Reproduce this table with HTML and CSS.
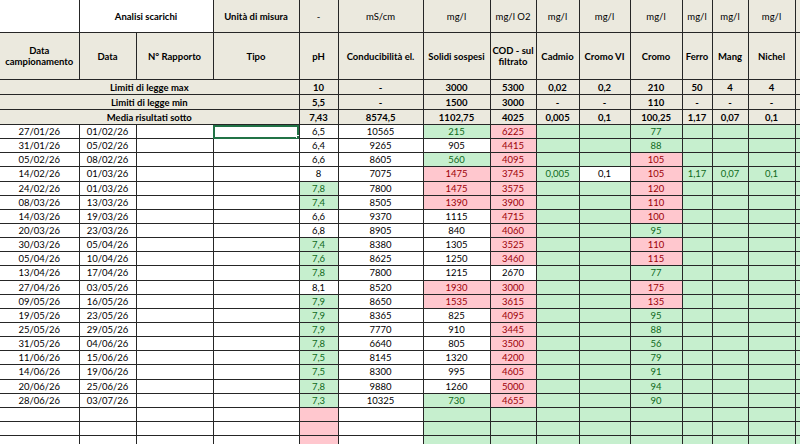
FILE: index.html
```html
<!DOCTYPE html>
<html lang="it">
<head>
<meta charset="utf-8">
<title>Analisi scarichi</title>
<link rel="stylesheet" href="styles.css">
</head>
<body>
<table class="sheet">
  <colgroup>
    <col class="c-a"><col class="c-b"><col class="c-c"><col class="c-d"><col class="c-e">
    <col class="c-f"><col class="c-g"><col class="c-h"><col class="c-i"><col class="c-j">
    <col class="c-k"><col class="c-l"><col class="c-m"><col class="c-n"><col class="c-o">
  </colgroup>
  <thead>
    <tr class="row-units">
      <td class="blank"></td>
      <td class="blank bold" colspan="2">Analisi scarichi</td>
      <td class="bold">Unità di misura</td>
      <td>-</td><td>mS/cm</td><td>mg/l</td><td>mg/l O2</td>
      <td>mg/l</td><td>mg/l</td><td>mg/l</td><td>mg/l</td><td>mg/l</td><td>mg/l</td><td></td>
    </tr>
    <tr class="row-names bold">
      <td>Data<br>campionamento</td><td>Data</td><td>N° Rapporto</td><td>Tipo</td>
      <td>pH</td><td>Conducibilità el.</td><td>Solidi sospesi</td><td>COD - sul<br>filtrato</td>
      <td>Cadmio</td><td>Cromo VI</td><td>Cromo</td><td>Ferro</td><td>Mang</td><td>Nichel</td><td></td>
    </tr>
    <tr class="row-lim bold">
      <td colspan="4">Limiti di legge max</td>
      <td>10</td><td>-</td><td>3000</td><td>5300</td><td>0,02</td><td>0,2</td><td>210</td><td>50</td><td>4</td><td>4</td><td></td>
    </tr>
    <tr class="row-lim bold">
      <td colspan="4">Limiti di legge min</td>
      <td>5,5</td><td>-</td><td>1500</td><td>3000</td><td>-</td><td>-</td><td>110</td><td>-</td><td>-</td><td>-</td><td></td>
    </tr>
    <tr class="row-lim bold">
      <td colspan="4">Media risultati sotto</td>
      <td>7,43</td><td>8574,5</td><td>1102,75</td><td>4025</td><td>0,005</td><td>0,1</td><td>100,25</td><td>1,17</td><td>0,07</td><td>0,1</td><td></td>
    </tr>
  </thead>
  <tbody>
    <tr><td>27/01/26</td><td>01/02/26</td><td></td><td class="sel"></td><td>6,5</td><td>10565</td><td class="g">215</td><td class="r">6225</td><td></td><td></td><td>77</td><td></td><td></td><td></td><td></td></tr>
    <tr><td>31/01/26</td><td>05/02/26</td><td></td><td></td><td>6,4</td><td>9265</td><td>905</td><td class="r">4415</td><td></td><td></td><td>88</td><td></td><td></td><td></td><td></td></tr>
    <tr><td>05/02/26</td><td>08/02/26</td><td></td><td></td><td>6,6</td><td>8605</td><td class="g">560</td><td class="r">4095</td><td></td><td></td><td class="r">105</td><td></td><td></td><td></td><td></td></tr>
    <tr><td>14/02/26</td><td>01/03/26</td><td></td><td></td><td>8</td><td>7075</td><td class="r">1475</td><td class="r">3745</td><td>0,005</td><td class="w">0,1</td><td class="r">105</td><td>1,17</td><td>0,07</td><td>0,1</td><td></td></tr>
    <tr><td>24/02/26</td><td>01/03/26</td><td></td><td></td><td class="g">7,8</td><td>7800</td><td class="r">1475</td><td class="r">3575</td><td></td><td></td><td class="r">120</td><td></td><td></td><td></td><td></td></tr>
    <tr><td>08/03/26</td><td>13/03/26</td><td></td><td></td><td class="g">7,4</td><td>8505</td><td class="r">1390</td><td class="r">3900</td><td></td><td></td><td class="r">110</td><td></td><td></td><td></td><td></td></tr>
    <tr><td>14/03/26</td><td>19/03/26</td><td></td><td></td><td>6,6</td><td>9370</td><td>1115</td><td class="r">4715</td><td></td><td></td><td class="r">100</td><td></td><td></td><td></td><td></td></tr>
    <tr><td>20/03/26</td><td>23/03/26</td><td></td><td></td><td>6,8</td><td>8905</td><td>840</td><td class="r">4060</td><td></td><td></td><td>95</td><td></td><td></td><td></td><td></td></tr>
    <tr><td>30/03/26</td><td>05/04/26</td><td></td><td></td><td class="g">7,4</td><td>8380</td><td>1305</td><td class="r">3525</td><td></td><td></td><td class="r">110</td><td></td><td></td><td></td><td></td></tr>
    <tr><td>05/04/26</td><td>10/04/26</td><td></td><td></td><td class="g">7,6</td><td>8625</td><td>1250</td><td class="r">3460</td><td></td><td></td><td class="r">115</td><td></td><td></td><td></td><td></td></tr>
    <tr><td>13/04/26</td><td>17/04/26</td><td></td><td></td><td class="g">7,8</td><td>7800</td><td>1215</td><td>2670</td><td></td><td></td><td>77</td><td></td><td></td><td></td><td></td></tr>
    <tr><td>27/04/26</td><td>03/05/26</td><td></td><td></td><td>8,1</td><td>8520</td><td class="r">1930</td><td class="r">3000</td><td></td><td></td><td class="r">175</td><td></td><td></td><td></td><td></td></tr>
    <tr><td>09/05/26</td><td>16/05/26</td><td></td><td></td><td class="g">7,9</td><td>8650</td><td class="r">1535</td><td class="r">3615</td><td></td><td></td><td class="r">135</td><td></td><td></td><td></td><td></td></tr>
    <tr><td>19/05/26</td><td>23/05/26</td><td></td><td></td><td class="g">7,9</td><td>8365</td><td>825</td><td class="r">4095</td><td></td><td></td><td>95</td><td></td><td></td><td></td><td></td></tr>
    <tr><td>25/05/26</td><td>29/05/26</td><td></td><td></td><td class="g">7,9</td><td>7770</td><td>910</td><td class="r">3445</td><td></td><td></td><td>88</td><td></td><td></td><td></td><td></td></tr>
    <tr><td>31/05/26</td><td>04/06/26</td><td></td><td></td><td class="g">7,8</td><td>6640</td><td>805</td><td class="r">3500</td><td></td><td></td><td>56</td><td></td><td></td><td></td><td></td></tr>
    <tr><td>11/06/26</td><td>15/06/26</td><td></td><td></td><td class="g">7,5</td><td>8145</td><td>1320</td><td class="r">4200</td><td></td><td></td><td>79</td><td></td><td></td><td></td><td></td></tr>
    <tr><td>14/06/26</td><td>19/06/26</td><td></td><td></td><td class="g">7,5</td><td>8300</td><td>995</td><td class="r">4605</td><td></td><td></td><td>91</td><td></td><td></td><td></td><td></td></tr>
    <tr><td>20/06/26</td><td>25/06/26</td><td></td><td></td><td class="g">7,8</td><td>9880</td><td>1260</td><td class="r">5000</td><td></td><td></td><td>94</td><td></td><td></td><td></td><td></td></tr>
    <tr><td>28/06/26</td><td>03/07/26</td><td></td><td></td><td class="g">7,3</td><td>10325</td><td class="g">730</td><td class="r">4655</td><td></td><td></td><td>90</td><td></td><td></td><td></td><td></td></tr>
    <tr><td></td><td></td><td></td><td></td><td class="r"></td><td></td><td class="g"></td><td class="g"></td><td></td><td></td><td></td><td></td><td></td><td></td><td></td></tr>
    <tr><td></td><td></td><td></td><td></td><td class="r"></td><td></td><td class="g"></td><td class="g"></td><td></td><td></td><td></td><td></td><td></td><td></td><td></td></tr>
    <tr><td></td><td></td><td></td><td></td><td class="r"></td><td></td><td class="g"></td><td class="g"></td><td></td><td></td><td></td><td></td><td></td><td></td><td></td></tr>
  </tbody>
</table>
</body>
</html>
```
FILE: styles.css
```css
:root {
  --beige: #ebe9de;
  --line: #262626;
  --green-bg: #c6efce;
  --green-fg: #0e6a1a;
  --red-bg: #ffc7ce;
  --red-fg: #9c0006;
}

html, body {
  margin: 0;
  padding: 0;
  background: #fff;
  overflow: hidden;
}

body {
  width: 800px;
  height: 444px;
  font-family: Lato, "Liberation Sans", sans-serif;
  font-size: 9.5px;
  color: #000;
}

.sheet {
  border-collapse: collapse;
  table-layout: fixed;
  width: 840px;
}

.c-a { width: 79px; }
.c-b { width: 57px; }
.c-c { width: 77px; }
.c-d { width: 86px; }
.c-e { width: 39px; }
.c-f { width: 85px; }
.c-g { width: 67px; }
.c-h { width: 46px; }
.c-i { width: 43px; }
.c-j { width: 51px; }
.c-k { width: 52px; }
.c-l { width: 30px; }
.c-m { width: 36px; }
.c-n { width: 47px; }
.c-o { width: 45px; }

.sheet td {
  border: 1px solid var(--line);
  padding: 0;
  text-align: center;
  vertical-align: middle;
  white-space: nowrap;
  overflow: hidden;
  line-height: 11px;
}

.bold { font-weight: 700; }

thead td { background: var(--beige); }

.row-units td { height: 32px; border-top: none; }
.row-units td.blank { background: #fff; }
.row-units td:first-child { border-left: none; }

.row-names td { height: 46px; }
.row-names td:first-child { border-left: none; }

.row-lim td { height: 14px; }
.row-lim td:first-child { border-left: none; }

tbody td {
  height: 13.15px;
  background: #fff;
}
tbody td:first-child { border-left: none; }

tbody td:nth-child(n+9) {
  background: var(--green-bg);
  color: var(--green-fg);
}

tbody td.g {
  background: var(--green-bg);
  color: var(--green-fg);
}

tbody td.r {
  background: var(--red-bg);
  color: var(--red-fg);
}

tbody td.w {
  background: #fff;
  color: #000;
}

tbody td.sel {
  position: relative;
  outline: 2px solid #217346;
  outline-offset: -2px;
}

tbody td.sel::after {
  content: "";
  position: absolute;
  right: -3px;
  bottom: -3px;
  width: 4px;
  height: 4px;
  background: #217346;
  border: 1px solid #fff;
}
```
